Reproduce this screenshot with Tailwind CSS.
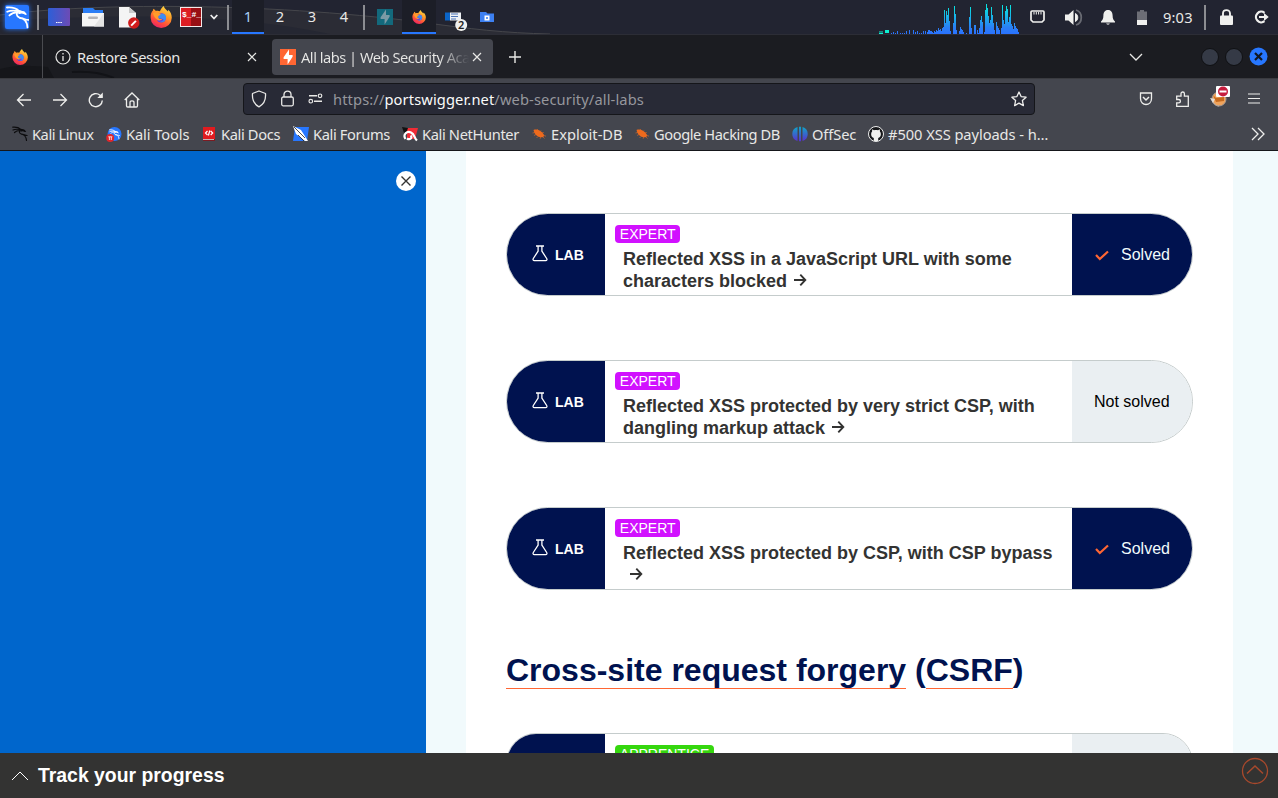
<!DOCTYPE html>
<html lang="en">
<head>
<meta charset="utf-8">
<title>All labs | Web Security Academy</title>
<script src="https://cdn.jsdelivr.net/npm/@tailwindcss/browser@4"></script>
</head>
<body class="w-[1278px] h-[798px] overflow-hidden flex flex-col bg-white font-['Noto_Sans',sans-serif] text-[14.67px] text-[#e8e8e6]">

<svg class="absolute w-0 h-0">
  <defs>
    <linearGradient id="fxg" x1="0.8" y1="0" x2="0.3" y2="1"><stop offset="0" stop-color="#ffe14a"/><stop offset=".4" stop-color="#ff9a26"/><stop offset=".75" stop-color="#ff4a3c"/><stop offset="1" stop-color="#e8226a"/></linearGradient>
    <linearGradient id="term" x1="0" x2="1"><stop offset="0" stop-color="#2c5fd8"/><stop offset="1" stop-color="#6d4bb5"/></linearGradient>
    <linearGradient id="off" x1="0" x2="0" y1="0" y2="1"><stop offset="0" stop-color="#10a5c8"/><stop offset="1" stop-color="#5a2fd0"/></linearGradient>
    <linearGradient id="cpu" gradientUnits="userSpaceOnUse" x1="0" x2="0" y1="4" y2="30"><stop offset="0" stop-color="#0bdde0"/><stop offset=".75" stop-color="#2a7ff5"/><stop offset="1" stop-color="#2a72ff"/></linearGradient>
  </defs>
  <symbol id="firefox" viewBox="0 0 20 20">
    <path fill="url(#fxg)" d="M12.6 0c.2 1.6 1.3 2.5 2.6 3.8l1.2 1.3.2-1.6c1.8 1.7 3.2 4 3.2 7.2a9.6 9.3 0 0 1-19.2 0C.4 8 1.200 5.600 2.700 4.200L3 2.500c1 .4 1.700 1.200 2.200 2.100 1.300-.4 2.700-.3 3.800.2C9.800 2.900 11 1 12.600 0z"/>
    <circle cx="10.200" cy="10.800" r="4.300" fill="#6a43d8"/>
    <path fill="#3f8df0" d="M9 7.500c3-1.500 6 .7 5.600 3.700-.5 3-3.300 4.200-5.600 3.400 1.900-.3 3.200-1.300 3.300-2.500L7 10.500z"/>
    <path fill="#ff9c2b" d="M2.600 6.500c2-1 4-1 5.200.2L9.800 7c.2 1-2 1.700-2.300 2.500C7 11 9 12.600 11.200 11.600c-.9 1.700-3.600 2-5 .6C4 10.600 3.400 8.500 2.600 6.500z"/>
  </symbol>
  <symbol id="dragon" viewBox="0 0 16 16">
    <path fill="none" stroke="currentColor" stroke-width="1.200" stroke-linecap="round" d="M.8 1.200c3.400-.3 6 .3 8 2.200 1.300.3 2.700.6 4.300 2M1 4c2.600-1.200 5-.8 7-.5M2.500 6.500c1.500-1.400 3-2 5-2M8.500 3.500C6.800 5 7 7.200 9.200 8c3 .7 5 1.700 5.300 6.500M9.500 8.200c2.300 0 3.500 1.300 5.600 1.300"/>
    <path fill="currentColor" d="M8 3l4.600.8 1.600 2.200-3.500-.8-2.200.5z"/>
  </symbol>
  <symbol id="bug" viewBox="0 0 16 16">
    <path fill="#ee6a1d" d="M2.500 4C6 2.800 10 4.500 12.800 8.500c.8 1.900-.6 3-3 2.800C6.500 11 3.500 8.500 2.500 4z"/>
    <path stroke="#ee6a1d" stroke-width=".6" fill="none" d="M4 6.500L1.500 7M5 8.500L3 9.500M7 10.500L5.500 12M9.500 11l-.3 1.800M6 4.500L6.500 3M9 5.500L10 4.500M11 7l1.800-.6M13 9.500l2 .7M12 11l1.500 1.500"/>
  </symbol>
  <symbol id="flask" viewBox="0 0 16 17">
    <path fill="none" stroke="#fff" stroke-width="1.300" stroke-linejoin="round" d="M4 1h8M6.100 1v5.200L1.300 13.500c-.7 1.200 0 2.100 1 2.100h11.400c1 0 1.700-.9 1-2.100L9.900 6.200V1"/>
  </symbol>
  <symbol id="arrow" viewBox="0 0 14 14">
    <path fill="none" stroke="#333332" stroke-width="1.900" d="M1 7h11.500M7.300 1.700L12.300 7l-5 5.300"/>
  </symbol>
  <symbol id="bolt" viewBox="0 0 16 16">
    <path fill="currentColor" d="M9 .5V6h3.600v1.800L7.600 15.500V10H3.600V8.200z"/>
  </symbol>
</svg>

<!-- desktop panel -->
<header class="relative h-[34px] shrink-0 bg-[#222431] flex items-center overflow-hidden">
  <svg class="absolute left-0 top-0" width="560" height="34"><path d="M0 15C90 3 260 2 420 22c50 7 85 11 130 12H0z" fill="#2b2c35"/><path d="M0 15C90 3 260 2 420 22c50 7 85 11 130 12" stroke="#45464b" fill="none"/><path d="M0 22C90 14 230 12 330 34H0z" fill="#252732"/></svg>
  <div class="relative flex items-center h-full w-full">
    <div class="ml-[5px] w-6 h-6 bg-[#2777ff] rounded-[2px] text-white shadow-[0_0_5px_#2777ff]"><svg class="w-6 h-6" viewBox="-.5 -.5 17 17"><use href="#dragon"/></svg></div>
    <div class="ml-[8px] w-[2px] h-[25px] bg-[#8c8d92]"></div>
    <svg class="ml-[9px]" width="22" height="18"><rect width="22" height="18" rx="1" fill="url(#term)"/><path d="M8 14.500h6" stroke="#fff" stroke-width="1.200" stroke-dasharray="1.500 .7"/></svg>
    <svg class="ml-[12px]" width="22" height="20"><path d="M1 1h10l2 2h8v5H1z" fill="#2b7df5"/><path d="M0 6h22v13.500H0z" fill="#f5f5f5"/><path d="M22 6v13.500H12z" fill="#e4e4e4"/><rect x="6" y="9.500" width="10" height="2.500" rx="1.200" fill="#b4b4b8"/></svg>
    <svg class="ml-[15px]" width="21" height="23"><path d="M0 1h10l7 6v14.500H0z" fill="#f4f4f4"/><path d="M10 1l7 6h-7z" fill="#c9c9c9"/><circle cx="14.800" cy="17" r="5.700" fill="#d01c1c"/><path d="M12.200 19.600l4.700-4.700" stroke="#fff" stroke-width="2"/></svg>
    <svg class="ml-[10px]" width="22" height="22"><use href="#firefox"/></svg>
    <svg class="ml-[8px]" width="22" height="20"><rect x=".5" y=".5" width="21" height="19" fill="#dc1c22" stroke="#f3e9e9"/><path d="M11 1h10v18H11z" fill="#980f14"/><text x="2" y="9.500" font-family="Liberation Mono" font-weight="bold" font-size="8" fill="#fff">$_</text><text x="11.500" y="9.500" font-family="Liberation Mono" font-weight="bold" font-size="8" fill="#fff">#_</text></svg>
    <svg class="ml-[8px]" width="8" height="6"><path d="M.7 1L4 4.500 7.300 1" stroke="#eee" stroke-width="1.800" fill="none"/></svg>
    <div class="ml-[9px] w-[2px] h-[25px] bg-[#8c8d92]"></div>
    <nav class="ml-[3px] flex h-full text-center leading-[33px]">
      <div class="w-8 bg-[#1c1e27] border-b-2 border-[#2777ff] text-[#a9d1f5]">1</div>
      <div class="w-8">2</div><div class="w-8">3</div><div class="w-8">4</div>
    </nav>
    <div class="ml-[3px] w-[2px] h-[25px] bg-[#8c8d92]"></div>
    <div class="ml-[3px] w-[34px] flex justify-center"><svg width="16" height="16" class="bg-[#13697c] text-[#7b9aa5]"><use href="#bolt"/></svg></div>
    <div class="w-[34px] h-full bg-[#1c1e27] border-b-2 border-[#2777ff] flex justify-center items-center pt-[2px]"><svg width="14" height="14"><use href="#firefox"/></svg></div>
    <div class="w-[34px] flex pl-[9px]"><svg width="24" height="28"><path d="M0 9.500h5v8H0z" fill="#0b65c8"/><path d="M5 9.500h11v8H5z" fill="#eef1f5"/><path d="M6 11h7M6 13.500h7M6 16h5" stroke="#4d75b8"/><circle cx="16.200" cy="22" r="6" fill="#f0f0ee"/><text x="16.200" y="26" text-anchor="middle" font-family="Noto Sans" font-weight="600" font-size="11" fill="#222">2</text></svg></div>
    <div class="w-[34px] flex justify-center"><svg width="14" height="12"><path d="M0 1h6l1.500 1.500H14V11H0z" fill="#3d80f2"/><path d="M4.500 4.500h5v5h-5z" fill="#fff"/><path d="M6.200 6h1.600v2H6.200z" fill="#3d80f2"/></svg></div>
    <svg class="ml-[375px]" width="141" height="34">
      <path d="M0 33h4M6 31.500h4" stroke="#0ef0d0" stroke-width="3"/><path d="M0 32.500h4" stroke="#177" />
      <path transform="translate(0 4)" stroke="url(#cpu)" d="M12.500 30v-1M14.500 30v-2M16.500 30v-1M18.500 30v-3M21.500 30v-1M23.500 30v-1M25.500 30v-1M27.500 30v-3M30.500 30v-4M34.500 30v-4M36.500 30v-2M38.500 30v-3M40.500 30v-1M42.500 30v-1M44.500 30v-3M46.500 30v-3M48.500 30v-2M49.500 30v-4M50.500 30v-4M51.500 30v-3M52.500 30v-3M53.500 30v-2M54.500 30v-1M55.500 30v-3M56.500 30v-2M57.500 30v-4M58.500 30v-3M59.500 30v-6M60.500 30v-4M61.500 30v-5M62.500 30v-3M63.500 30v-6M64.500 30v-7M65.500 30v-24M66.500 30v-11M67.500 30v-23M68.500 30v-19M69.500 30v-26M70.500 30v-13M71.500 30v-3M74.500 30v-11M75.500 30v-28M76.500 30v-20M77.500 30v-4M80.500 30v-3M81.500 30v-7M82.500 30v-5M83.500 30v-4M84.500 30v-2M87.500 30v-1M90.500 30v-17M91.500 30v-27M92.500 30v-6M95.500 30v-9M96.500 30v-9M98.500 30v-4M99.500 30v-1M100.500 30v-6M101.500 30v-14M102.500 30v-18M103.500 30v-12M105.500 30v-2M106.500 30v-24M107.500 30v-30M108.500 30v-26M109.500 30v-18M110.500 30v-11M111.500 30v-14M112.500 30v-27M113.500 30v-19M114.500 30v-11M115.500 30v-4M117.500 30v-12M118.500 30v-8M119.500 30v-6M120.500 30v-4M122.500 30v-6M123.500 30v-29M124.500 30v-14M125.500 30v-10M126.500 30v-23M127.500 30v-28M128.500 30v-25M129.500 30v-12M130.500 30v-17M131.500 30v-29M132.500 30v-10M133.500 30v-8M134.500 30v-5M135.500 30v-11M136.500 30v-8M137.500 30v-6M138.500 30v-5M139.500 30v-2"/>
    </svg>
    <svg class="ml-[10px]" width="15" height="14"><path d="M2 1h11c.6 0 1 .4 1 1v8l-2 2H3l-2-2V2c0-.6.400-1 1-1z" stroke="#f0f0ee" stroke-width="1.700" fill="none"/><path d="M4 2v2.500M6.300 2v2.500M8.600 2v2.500M11 2v2.500" stroke="#f0f0ee"/></svg>
    <svg class="ml-[20px]" width="18" height="17"><path d="M0 5.500h3.500L8.500 1v15l-5-4.500H0z" fill="#f0f0ee"/><path d="M10.500 4.500c3 1.500 3 6.500 0 8z" stroke="#f0f0ee" fill="#f0f0ee"/><path d="M11 1c7 2 7 13 0 15" stroke="#686a72" stroke-width="1.800" fill="none"/></svg>
    <svg class="ml-[18px]" width="14" height="16"><path d="M7 1c3.300 0 4.600 2.500 4.600 5.500 0 3.500 1 4.500 2.400 6V13.500H0v-1c1.400-1.500 2.400-2.500 2.400-6C2.400 3.500 3.700 1 7 1zM5.200 14.500h3.600c-.3 1.500-3.300 1.500-3.600 0z" fill="#f0f0ee"/></svg>
    <svg class="ml-[22px]" width="10" height="15"><path d="M3 0h4v1.500h3V15H0V1.500h3z" fill="#6d6e76"/><path d="M0 10h10v5H0z" fill="#f0f0ee"/></svg>
    <span class="ml-[16px] -mt-px w-[31px] whitespace-nowrap tracking-[.15px]">9:03</span>
    <div class="ml-[10px] w-[2px] h-[25px] bg-[#8c8d92]"></div>
    <svg class="ml-[14px]" width="13" height="16"><rect y="6.500" width="13" height="9.500" rx="1" fill="#f0f0ee"/><path d="M3 7.500V4.500c0-4.500 7-4.500 7 0v3" stroke="#f0f0ee" stroke-width="1.900" fill="none"/></svg>
    <svg class="ml-[21px]" width="16" height="14"><path d="M10.500 2.800A5.300 5.300 0 1 0 10.500 11.200" stroke="#f0f0ee" stroke-width="2.200" fill="none"/><path d="M5 6h5V3l4.700 4L10 11V8H5z" fill="#f0f0ee"/></svg>
  </div>
</header>

<!-- tab strip -->
<div class="relative h-[45px] shrink-0 bg-[#1b1c21] border-t border-b border-t-[#2c2d36] border-b-[#3a3b40] flex items-center">
  <svg class="absolute left-0 top-0" width="130" height="43"><path d="M0 34c18-5 34-3 48-2l6 11H0z" fill="#15161a"/><path d="M72 37c15-1 30 1 42 6" stroke="#121317" stroke-width="2" fill="none"/></svg>
  <div class="relative w-[43px] h-full border-r border-[#4a4b50] flex items-center pl-3"><svg width="16" height="16"><use href="#firefox"/></svg></div>
  <div class="w-[221px] flex items-center pl-3">
    <svg width="16" height="16"><circle cx="8" cy="8" r="7" stroke="#e8e8e6" stroke-width="1.200" fill="none"/><path d="M8 7v5M8 4v1.500" stroke="#e8e8e6" stroke-width="1.300"/></svg>
    <span class="ml-[6px] w-[166px] whitespace-nowrap tracking-[-.36px]">Restore Session</span>
    <svg class="ml-[4px]" width="10" height="10"><path d="M1 1l8 8M9 1L1 9" stroke="#e8e8e6" stroke-width="1.200"/></svg>
  </div>
  <div class="ml-2 w-[221px] h-9 rounded bg-[#44464e] flex items-center pl-2">
    <svg width="16" height="16" class="bg-[#ff6633] text-white"><use href="#bolt"/></svg>
    <span class="ml-[5px] w-[168px] overflow-hidden whitespace-nowrap tracking-[-.5px] text-transparent bg-clip-text bg-linear-to-r from-[#e8e8e6] from-82% to-[#44464e]">All labs | Web Security Academy</span>
    <svg class="ml-[3px]" width="10" height="10"><path d="M1 1l8 8M9 1L1 9" stroke="#e8e8e6" stroke-width="1.200"/></svg>
  </div>
  <svg class="ml-[16px]" width="12" height="12"><path d="M6 0v12M0 6h12" stroke="#e8e8e6" stroke-width="1.400"/></svg>
  <svg class="ml-auto" width="14" height="8"><path d="M1 1l6 6 6-6" stroke="#e8e8e6" stroke-width="1.300" fill="none"/></svg>
  <div class="ml-[58px] mr-[10px] flex gap-[6px] items-center">
    <div class="w-[18px] h-[18px] rounded-full bg-[#353a46] border border-[#0f1013]"></div>
    <div class="w-[18px] h-[18px] rounded-full bg-[#353a46] border border-[#0f1013]"></div>
    <svg width="19" height="19"><circle cx="9.500" cy="9.500" r="9" fill="#2777ff"/><path d="M6 6l7 7M13 6l-7 7" stroke="#111722" stroke-width="2.200"/></svg>
  </div>
</div>

<!-- navigation toolbar -->
<div class="h-[41px] shrink-0 bg-[#44464e] flex items-center">
  <svg class="ml-4" width="16" height="14"><path d="M15 7H1.500M7.500 1l-6 6 6 6" stroke="#eeeeec" stroke-width="1.300" fill="none"/></svg>
  <svg class="ml-5" width="16" height="14"><path d="M1 7h13.500M8.500 1l6 6-6 6" stroke="#eeeeec" stroke-width="1.300" fill="none"/></svg>
  <svg class="ml-5" width="16" height="16"><path d="M14.300 8.500A6.500 6.500 0 1 1 12 3.200L14 5" stroke="#eeeeec" stroke-width="1.400" fill="none"/><path d="M14.800.5v5.500H9.300z" fill="#eeeeec"/></svg>
  <svg class="ml-5" width="16" height="16"><path d="M.7 8L8 1l7.300 7M2.500 6.500v7.200c0 .8.500 1.300 1.200 1.300h8.600c.7 0 1.200-.5 1.200-1.300V6.500M6 15v-4.500c0-2.300 4-2.300 4 0V15" stroke="#eeeeec" stroke-width="1.300" fill="none"/></svg>
  <div class="ml-[103px] -mt-[2px] w-[792px] h-8 rounded border border-[#15161a] bg-[#282a36] flex items-center">
    <svg class="ml-[7px]" width="16" height="18"><path d="M8 1l6.500 2.500C15 9.500 12.500 14.500 8 16.800 3.500 14.500 1 9.500 1.500 3.500z" stroke="#e8e8e6" stroke-width="1.300" fill="none" stroke-linejoin="round"/></svg>
    <svg class="ml-[14px]" width="13" height="17"><rect x=".7" y="7" width="11.600" height="8.800" rx="1.500" stroke="#e8e8e6" stroke-width="1.300" fill="none"/><path d="M3 7V4.500c0-4.500 7-4.500 7 0V7" stroke="#e8e8e6" stroke-width="1.300" fill="none"/></svg>
    <svg class="ml-[14px]" width="15" height="11"><path d="M1 2.800h8M6 8.200h8" stroke="#e8e8e6" stroke-width="1.400"/><circle cx="12" cy="2.800" r="1.800" stroke="#e8e8e6" stroke-width="1.200" fill="none"/><circle cx="2.800" cy="8.200" r="1.800" stroke="#e8e8e6" stroke-width="1.200" fill="none"/></svg>
    <span class="ml-[10px] whitespace-nowrap tracking-[.12px] text-[#96979d]">https://<span class="text-[#fbfbfa]">portswigger.net</span>/web-security/all-labs</span>
    <svg class="ml-auto mr-[7px]" width="16" height="16"><path d="M8 1l2.100 4.600 5 .6-3.700 3.400 1 5L8 12.100l-4.400 2.500 1-5L.9 6.200l5-.6z" stroke="#eeeeec" stroke-width="1.300" fill="none" stroke-linejoin="round"/></svg>
  </div>
  <svg class="ml-[104px] -mt-px" width="14" height="14"><path d="M1.500 1h11v5.500c0 8-11 8-11 0z" stroke="#eeeeec" stroke-width="1.300" fill="none"/><path d="M4 5l3 3 3-3" stroke="#eeeeec" stroke-width="1.500" fill="none"/></svg>
  <svg class="ml-[22px] -mt-[2px]" width="15" height="16"><path d="M1.700 15.300h11.600V5.200H9.400V2.800c0-2.400-3.400-2.400-3.400 0v2.400H1.700v3.300h2c2.300 0 2.300 3.300 0 3.300h-2z" stroke="#eeeeec" stroke-width="1.300" fill="none"/></svg>
  <svg class="ml-[20px] -mt-[6px]" width="21" height="24"><circle cx="9" cy="14" r="7" fill="#efa35c"/><path d="M3 10l3 3 8-1v4l-8 1z" fill="#c76a1d"/><path d="M2 15c2 4 4 6 7 6" stroke="#d8d0c8" fill="none"/><circle cx="9" cy="14" r="7" fill="none" stroke="#a89a90"/><path d="M0 13l5 1-2 4z" fill="#e3ddd5"/><rect x="6" y="1" width="14" height="11" rx="1" fill="#fff"/><circle cx="13" cy="6.500" r="5" fill="#c61c3e"/><path d="M9.500 6.500h7" stroke="#fff" stroke-width="2"/></svg>
  <svg class="ml-[17px] -mt-[2px]" width="12" height="11"><path d="M0 1h12M0 5.500h12M0 10h12" stroke="#eeeeec" stroke-width="1.200"/></svg>
</div>

<!-- bookmarks bar -->
<div class="h-[31px] shrink-0 bg-[#44464e] border-b border-[#15161a] flex items-center whitespace-nowrap pb-[2px]">
  <div class="ml-3 w-[94px] flex items-center gap-1 tracking-[-.45px]"><svg class="text-[#0c0c0e]" width="16" height="16"><use href="#dragon"/></svg>Kali Linux</div>
  <div class="w-[95px] flex items-center gap-1 tracking-[-.1px]"><svg class="text-white" width="16" height="16"><circle cx="8.500" cy="8" r="7" fill="#2777ff"/><use href="#dragon" x="3" y="3" width="11" height="11"/><circle cx="4.200" cy="12" r="4" fill="#e0262b"/><path d="M2.300 10.800h4M3.400 11v3M5.300 11v3" stroke="#fff" stroke-width=".8"/></svg>Kali Tools</div>
  <div class="w-[92px] flex items-center gap-1 tracking-[-.36px]"><svg width="16" height="16"><path d="M2 1h12v14H2z" fill="#e01b1f"/><path d="M2 13h12v2H2z" fill="#7c1b22"/><path d="M2 13.500h11" stroke="#ddd" stroke-width=".8"/><path d="M6.500 5L4.500 7l2 2M9.700 5l2 2-2 2M8.800 4.500L7.400 9.500" stroke="#fff" stroke-width="1.200" fill="none"/></svg>Kali Docs</div>
  <div class="w-[109px] flex items-center gap-1 tracking-[-.36px]"><svg width="16" height="16"><path d="M2 1h14L14 15H0z" fill="#2777ff"/><path d="M0 0l8 4 7 11-3 0L3 8z" fill="#fff"/><path d="M1 1l11 11M5 9l6 6" stroke="#222" stroke-width=".8"/></svg>Kali Forums</div>
  <div class="w-[129px] flex items-center gap-1 tracking-[-.36px]"><svg width="16" height="16"><path d="M5 2h11l-3 11H5z" fill="#f02c35"/><path d="M0 1l6 1L3 10z" fill="#111"/><path d="M3.500 13C.5 8.500 5 4.500 9 6.500c4 2 3 5.500 6 8M5 12.500c3 2 6-1 3.500-2.800" stroke="#fff" stroke-width="2.200" fill="none"/></svg>Kali NetHunter</div>
  <div class="w-[103px] flex items-center gap-1"><svg width="16" height="16"><use href="#bug"/></svg>Exploit-DB</div>
  <div class="w-[158px] flex items-center gap-1 tracking-[-.42px]"><svg width="16" height="16"><use href="#bug"/></svg>Google Hacking DB</div>
  <div class="w-[76px] flex items-center gap-1 tracking-[-.1px]"><svg width="16" height="16"><path d="M5.500 1v14A7.300 7.300 0 0 1 5.500 1zM7 .8h2v14.500H7zM10.500 1a7.300 7.300 0 0 1 0 14z" fill="url(#off)"/></svg>OffSec</div>
  <div class="flex items-center gap-1 tracking-[-.06px]"><svg width="16" height="16"><circle cx="8" cy="8" r="7.500" fill="#17181b" stroke="#eee"/><path d="M5.800 15v-3C3.500 11 3 9.500 3.200 7.500c0-.7.300-1.500.9-2V3.300L6 4.200c1.300-.3 2.700-.3 4 0l1.900-.9v2.200c.6.500.9 1.300.9 2 .2 2-.3 3.500-2.600 4.500v3z" fill="#f0f0ee"/></svg>#500 XSS payloads - h…</div>
  <svg class="ml-auto mr-[13px]" width="14" height="14"><path d="M1 1l6 6-6 6M7 1l6 6-6 6" stroke="#eeeeec" stroke-width="1.300" fill="none"/></svg>
</div>

<!-- page -->
<main class="h-[602px] shrink-0 flex overflow-hidden bg-[#f1fafc] font-['Liberation_Sans',Arial,sans-serif] text-[#333332]">
  <aside class="w-[426px] bg-[#0066cc] flex justify-end pt-5 pr-[10px]">
    <svg width="20" height="20"><circle cx="10" cy="10" r="10" fill="#fff"/><path d="M5.500 5.500l9 9M14.500 5.500l-9 9" stroke="#333332" stroke-width="1.400"/></svg>
  </aside>
  <section class="ml-10 w-[767px] bg-white px-10 pt-[62px]">
    <div class="flex flex-col gap-16">
      <article class="w-[687px] h-[83px] rounded-[42px] border border-[#c5cccc] overflow-hidden flex">
        <div class="w-[98px] bg-[#00124f] flex items-center pl-[25px] text-white text-sm font-bold"><svg class="-mt-[2px] mr-[7px]" width="16" height="17"><use href="#flask"/></svg>LAB</div>
        <div class="w-[467px] pt-[11px] pl-[10px]"><div class="w-fit h-[18px] rounded bg-[#d111ff] text-white text-sm leading-[18px] px-[4.800px]">EXPERT</div><h3 class="mt-[5px] pl-2 text-lg leading-[22px] font-bold whitespace-nowrap">Reflected XSS in a JavaScript URL with some<br>characters blocked <svg class="inline -mt-1 ml-[1px]" width="14" height="14"><use href="#arrow"/></svg></h3></div>
        <div class="w-[120px] bg-[#00124f] text-[#f1fafc] text-base flex items-center pl-[23px]"><svg class="mr-[12px] mt-[2px]" width="14" height="11"><path d="M1 5L4.800 9 13 1.500" stroke="#ff6633" stroke-width="2.200" fill="none"/></svg>Solved</div>
      </article>
      <article class="w-[687px] h-[83px] rounded-[42px] border border-[#c5cccc] overflow-hidden flex">
        <div class="w-[98px] bg-[#00124f] flex items-center pl-[25px] text-white text-sm font-bold"><svg class="-mt-[2px] mr-[7px]" width="16" height="17"><use href="#flask"/></svg>LAB</div>
        <div class="w-[467px] pt-[11px] pl-[10px]"><div class="w-fit h-[18px] rounded bg-[#d111ff] text-white text-sm leading-[18px] px-[4.800px]">EXPERT</div><h3 class="mt-[5px] pl-2 text-lg leading-[22px] font-bold whitespace-nowrap">Reflected XSS protected by very strict CSP, with<br>dangling markup attack <svg class="inline -mt-1 ml-[1px]" width="14" height="14"><use href="#arrow"/></svg></h3></div>
        <div class="w-[120px] bg-[#eaeff2] text-black text-base flex items-center pl-[22px]">Not solved</div>
      </article>
      <article class="w-[687px] h-[83px] rounded-[42px] border border-[#c5cccc] overflow-hidden flex">
        <div class="w-[98px] bg-[#00124f] flex items-center pl-[25px] text-white text-sm font-bold"><svg class="-mt-[2px] mr-[7px]" width="16" height="17"><use href="#flask"/></svg>LAB</div>
        <div class="w-[467px] pt-[11px] pl-[10px]"><div class="w-fit h-[18px] rounded bg-[#d111ff] text-white text-sm leading-[18px] px-[4.800px]">EXPERT</div><h3 class="mt-[5px] pl-2 text-lg leading-[22px] font-bold whitespace-nowrap">Reflected XSS protected by CSP, with CSP bypass<br><svg class="inline -mt-1 ml-[6px]" width="14" height="14"><use href="#arrow"/></svg></h3></div>
        <div class="w-[120px] bg-[#00124f] text-[#f1fafc] text-base flex items-center pl-[23px]"><svg class="mr-[12px] mt-[2px]" width="14" height="11"><path d="M1 5L4.800 9 13 1.500" stroke="#ff6633" stroke-width="2.200" fill="none"/></svg>Solved</div>
      </article>
    </div>
    <h2 class="mt-[62px] h-[37px] text-[32px] leading-[37px] font-bold text-[#00124f] whitespace-nowrap"><span class="border-b border-[#ff6633]">Cross-site request forgery</span> (<span class="border-b border-[#ff6633]">CSRF</span>)</h2>
    <article class="mt-[44px] w-[687px] h-[61px] rounded-[30px] border border-[#c5cccc] overflow-hidden flex">
      <div class="w-[98px] bg-[#00124f]"></div>
      <div class="w-[467px] pt-[11px] pl-[10px]"><div class="w-fit h-[18px] rounded bg-[#35d70e] text-white text-sm leading-[18px] px-[4.800px]">APPRENTICE</div></div>
      <div class="w-[120px] bg-[#eaeff2]"></div>
    </article>
  </section>
</main>

<footer class="h-[45px] shrink-0 bg-[#333332] flex items-center font-['Liberation_Sans',Arial,sans-serif] text-white">
  <svg class="ml-[11px]" width="18" height="10"><path d="M1 9l8-8 8 8" stroke="#fff" fill="none"/></svg>
  <span class="ml-[9px] text-[19.4px] font-bold leading-[45px]">Track your progress</span>
  <svg class="ml-auto mr-[9px] -mt-[9px]" width="28" height="28"><circle cx="14" cy="14" r="12.500" stroke="#a8492c" stroke-width="1.300" fill="none"/><path d="M6 16.500l8-7.500 8 7.500" stroke="#a8492c" stroke-width="1.500" fill="none"/></svg>
</footer>
</body>
</html>
